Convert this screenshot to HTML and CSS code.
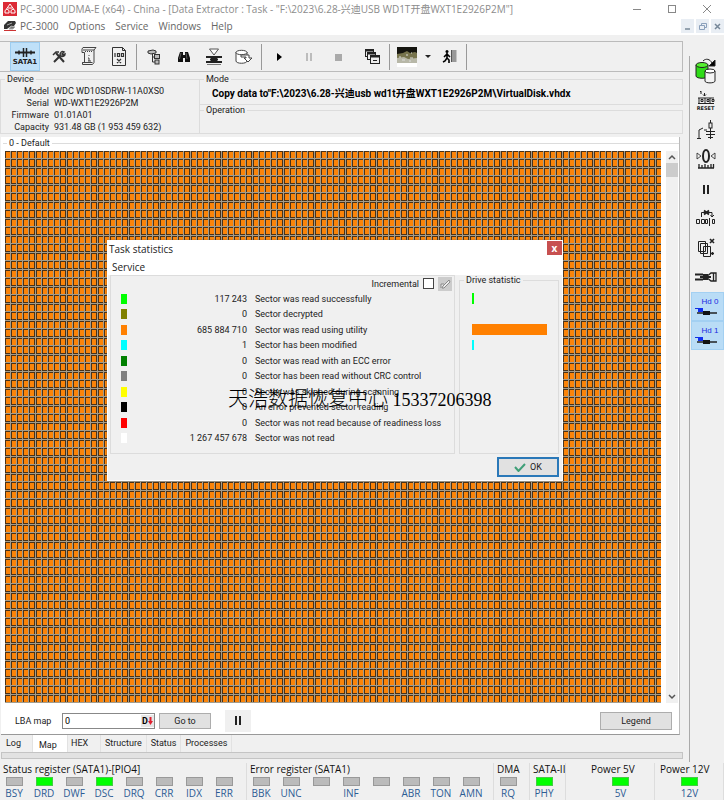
FILE: index.html
```html
<!DOCTYPE html>
<html lang="en">
<head>
<meta charset="utf-8">
<title>PC-3000 UDMA-E</title>
<link rel="stylesheet" href="styles.css">
</head>
<body>
<div class="window">
  <header class="titlebar">
    <svg class="app-icon" width="14" height="14" viewBox="0 0 14 14"><rect width="14" height="14" fill="#dc2a36"/><path d="M7 2L3.500 7M7 2l3.500 5M2 11V8.500L4 7l2 1.500V11zM8 11V8.500L10 7l2 1.500V11zM5 6h4" fill="none" stroke="#fff"/></svg>
    <h1 class="title">PC-3000 UDMA-E (x64) - China - [Data Extractor : Task - "F:\2023\6.28-兴迪USB WD1T开盘WXT1E2926P2M"]</h1>
    <div class="win-controls">
      <button aria-label="Minimize"><svg width="10" height="10"><path d="M1 5.500h8" stroke="#888"/></svg></button>
      <button aria-label="Maximize"><svg width="10" height="10"><rect x="1.500" y="1.500" width="7" height="7" fill="none" stroke="#888"/></svg></button>
      <button aria-label="Close"><svg width="10" height="10"><path d="M1 1l8 8M9 1l-8 8" stroke="#888"/></svg></button>
    </div>
  </header>
  <nav class="menubar">
    <svg width="14" height="12" viewBox="0 0 14 12"><path d="M1 5l4-4h7l1 2-2 3H8L4 9H1z" fill="#333"/><path d="M4 5l5-2M8 6l4 1-2 2H6z" stroke="#aaa" fill="#777"/><path d="M1 10.500h12" stroke="#c33"/></svg>
    <a href="#">PC-3000</a><a href="#">Options</a><a href="#">Service</a><a href="#">Windows</a><a href="#">Help</a>
    <div class="mdi-controls">
      <button aria-label="Minimize task"><svg width="9" height="9"><path d="M2 7h5" stroke="#789" stroke-width="1.500"/></svg></button>
      <button aria-label="Restore task"><svg width="9" height="9"><path d="M3.500 3V1.500h5v4H7M1.500 3.500h5v4h-5z" fill="none" stroke="#8ba0bb"/></svg></button>
      <button aria-label="Close task"><svg width="9" height="9"><path d="M2 2l5 5M7 2L2 7" stroke="#789" stroke-width="1.500"/></svg></button>
    </div>
  </nav>

  <div class="workspace">
    <main class="main">
      <div class="toolbar">
        <button class="tool active" aria-label="SATA1"><svg width="24" height="11" viewBox="0 0 24 11"><path d="M2 5.500h20" stroke="#222" stroke-width="2"/><path d="M6 3.500v4M18 3.500v4M10.500 1v9M13.500 1v9" stroke="#222" stroke-width="1.500"/></svg><span>SATA1</span></button>
        <button class="tool" aria-label="Utilities"><svg width="14" height="14" viewBox="0 0 14 14"><path d="M2 12l7-7M4 3l8 9" stroke="#333" stroke-width="2"/><path d="M1 5l3-3h3M8 5c0-3 2-4 4-3l-2 2 1 1 2-1c0 2-2 3-4 2" fill="none" stroke="#333" stroke-width="1.500"/></svg></button>
        <button class="tool" aria-label="Script"><svg width="18" height="19" viewBox="0 0 18 19" fill="none" stroke="#444"><path d="M4.500 5.500H2V2l1-1.500h13L14 3v12.500l-1.500 2H2.500v-2h2v-10M14 3H3M2.500 15.500h10"/><path d="M5 4.500h7" stroke-dasharray="1 1"/><path d="M9 8v1M8 11h1v3M8 14h3"/></svg></button>
        <button class="tool" aria-label="Report"><svg width="16" height="19" viewBox="0 0 16 19" fill="none" stroke="#333"><path d="M1.500 .5h10l3 3v15h-13zM11.500.5v3h3"/><path d="M4 6v4M6.500 6.500h2v3h-2zM10.500 6.500h2v3h-2zM6 12l4 4M10 12l-4 4" stroke-width="1.200"/></svg></button>
        <span class="sep"></span>
        <button class="tool" aria-label="Tree"><svg width="14" height="16" viewBox="0 0 14 16" fill="#bbb" stroke="#333"><path d="M5.500 4v9H8M5.500 8H8" fill="none"/><path d="M1 2l5-1 3 1v2l-5 1-3-1z"/><rect x="7.500" y="5.500" width="5" height="4"/><rect x="8" y="11" width="4" height="4"/></svg></button>
        <button class="tool" aria-label="Search"><svg width="14" height="12" viewBox="0 0 14 12"><path d="M3 1h3v3h2V1h3l2 6v4H8V7H6v4H1V7z" fill="#111"/><path d="M4 2L2.500 8M9 2l1 6" stroke="#777" stroke-width=".7"/></svg></button>
        <button class="tool" aria-label="Sector edit"><svg width="18" height="17" viewBox="0 0 18 17"><path d="M4.500 1h9L9 7z" fill="#fff" stroke="#555"/><path d="M1 9h16M1 14h16M5 11.500h8" stroke="#222" stroke-width="2"/><path d="M6 8h6v7H6z" fill="#222"/><path d="M2 16.500h14" stroke="#777"/></svg></button>
        <button class="tool" aria-label="Copy image"><svg width="20" height="16" viewBox="0 0 20 16" fill="#fff" stroke="#444"><path d="M2 3v9c0 3 11 3 11 0V3"/><ellipse cx="7.500" cy="3.500" rx="5.500" ry="2.200"/><path d="M7 6h8v3h3l-4 4-4-4h2V8H7z"/></svg></button>
        <span class="sep"></span>
        <button class="tool" aria-label="Start"><svg width="10" height="10"><path d="M3 1v8l5-4z" fill="#000"/></svg></button>
        <button class="tool" aria-label="Pause"><svg width="10" height="10"><path d="M3 1v8M7 1v8" stroke="#aaa" stroke-width="1.500"/></svg></button>
        <button class="tool" aria-label="Stop"><svg width="10" height="10"><rect x="1" y="2" width="7" height="7" fill="#aaa"/></svg></button>
        <span class="space"></span>
        <button class="tool" aria-label="Tasks"><svg width="17" height="17" viewBox="0 0 17 17" fill="#eee" stroke="#222"><rect x="1.500" y="1.500" width="8" height="7"/><path d="M1 2.500h9" stroke-width="2"/><rect x="3.500" y="4.500" width="8" height="7"/><path d="M3 5.500h9" stroke-width="2"/><rect x="6.500" y="7.500" width="9" height="8"/><path d="M6 8.500h10" stroke-width="2"/><path d="M9 12.500h4"/></svg></button>
        <span class="sep"></span>
        <button class="tool" aria-label="Map view"><svg width="20" height="20" viewBox="0 0 20 20"><rect width="20" height="20" fill="#fff"/><rect width="20" height="12" fill="#14140f"/><path d="M0 7l6-1 4-2 3 2 5-1 2 1v7H0z" fill="#77744d"/><path d="M0 11l7-1 4 2 9-1v5H0z" fill="#b8b8a8"/><path d="M2 10h2M9 8h2M13 11h3M14 6h1M5 13h3M12 14h2" stroke="#ddd"/></svg></button>
        <button class="tool narrow" aria-label="Map view options"><svg width="6" height="4"><path d="M0 0h6L3 3z" fill="#222"/></svg></button>
        <button class="tool" aria-label="Exit"><svg width="15" height="15" viewBox="0 0 15 15"><rect x="9.500" y="1" width="5" height="12" fill="#999"/><path d="M9.500 1v12" stroke="#555"/><circle cx="5" cy="2.500" r="1.500"/><path d="M5 4v5l2 2v3M5 9l-2 3-2 1M5 5L2 8M5 5l3 3" fill="none" stroke="#000" stroke-width="1.600"/></svg></button>
        <span class="sep"></span>
      </div>

      <div class="info">
        <fieldset class="group device"><legend>Device</legend>
          <dl>
            <dt>Model</dt><dd>WDC WD10SDRW-11A0XS0</dd>
            <dt>Serial</dt><dd>WD-WXT1E2926P2M</dd>
            <dt>Firmware</dt><dd>01.01A01</dd>
            <dt>Capacity</dt><dd>931.48 GB (1 953 459 632)</dd>
          </dl>
        </fieldset>
        <div class="jobs">
          <fieldset class="group mode"><legend>Mode</legend><p>Copy data to"F:\2023\6.28-兴迪usb wd1t开盘WXT1E2926P2M\VirtualDisk.vhdx</p></fieldset>
          <fieldset class="group operation"><legend>Operation</legend></fieldset>
        </div>
      </div>

      <section class="map-panel">
        <fieldset class="group map-group"><legend>0 - Default</legend>
          <div class="map-row">
            <svg class="map" role="img" aria-label="Sector map" shape-rendering="crispEdges">
              <defs>
                <pattern id="cells" width="31" height="17" patternUnits="userSpaceOnUse">
                  <rect width="31" height="17" fill="#a39c8c"/>
                  <path d="M0 0h5v7H0zM6 0h5v7H6zM12 0h5v7h-5zM18 0h5v7h-5zM24 0h6v7h-6zM0 8h5v8H0zM6 8h5v8H6zM12 8h5v8h-5zM18 8h5v8h-5zM24 8h6v8h-6z" fill="#4a3218"/>
                  <path d="M1 1h4v6H1zM7 1h4v6H7zM13 1h4v6h-4zM19 1h4v6h-4zM25 1h4v6h-4zM1 9h4v6H1zM7 9h4v6H7zM13 9h4v6h-4zM19 9h4v6h-4zM25 9h4v6h-4z" fill="#fb8409"/>
                </pattern>
              </defs>
              <rect width="100%" height="100%" fill="url(#cells)"/>
            </svg>
            <div class="scroll">
              <button aria-label="Scroll up"><svg width="8" height="6"><path d="M1 5l3-3 3 3" fill="none" stroke="#555" stroke-width="1.500"/></svg></button>
              <div class="thumb"></div>
              <button aria-label="Scroll down"><svg width="8" height="6"><path d="M1 1l3 3 3-3" fill="none" stroke="#555" stroke-width="1.500"/></svg></button>
            </div>
          </div>
        </fieldset>
        <div class="lba">
          <label for="lba">LBA map</label>
          <div class="lba-box"><input id="lba" type="text" value="0"><button aria-label="Decimal"><b>D</b><svg width="5" height="8"><path d="M2.500 0v6" stroke="#e02030" stroke-width="2"/><path d="M0 4h5L2.500 8z" fill="#e02030"/></svg></button></div>
          <button class="btn goto">Go to</button>
          <button class="pause" aria-label="Pause map"><svg width="8" height="9"><path d="M2 0v9M6 0v9" stroke="#222" stroke-width="2"/></svg></button>
          <button class="btn legend-btn">Legend</button>
        </div>
      </section>

      <nav class="tabs"><a href="#">Log</a><a href="#" class="current">Map</a><a href="#" class="hex">HEX</a><a href="#">Structure</a><a href="#">Status</a><a href="#">Processes</a></nav>
      <div class="progress"></div>
    </main>

    <aside class="rail">
      <div class="rail-tools">
        <button aria-label="Copy drives"><svg width="22" height="26" viewBox="0 0 22 26" stroke="#222"><path d="M1 7v11c0 3 12 3 12 0V7" fill="#2fdc18"/><ellipse cx="7" cy="7" rx="6" ry="2.500" fill="#55f030"/><path d="M10 13v10c0 2.500 10 2.500 10 0V13" fill="#f4f4f4"/><ellipse cx="15" cy="13" rx="5" ry="2" fill="#fff"/><path d="M8 3c3-3 7-2 9 2" fill="none"/><path d="M20 2v6h-6z" fill="#000"/></svg></button>
        <button class="reset" aria-label="Reset"><svg width="18" height="15" viewBox="0 0 18 15" fill="none" stroke="#222"><path d="M4 1v3M3 2l1-1M7.500 3v3M6 4.500l1.500 1.500L9 4.500"/><path d="M1 8h16M1 13.500h16M2 8v5M4 9.500h2v2H4zM8 8v5M10 9.500h2v2h-2zM13 8v5M15 9.500h2v2h-2z"/></svg><span>RESET</span></button>
        <button aria-label="Power"><svg width="20" height="20" viewBox="0 0 20 20" fill="none" stroke="#222"><path d="M1 18.500h4M3 18v-8l4-2M8 10h3M14.500 0v3M14.500 8v11M10 11.500h9M10 14.500h9M12 17.500h5"/><rect x="13" y="3" width="3" height="5"/></svg></button>
        <button aria-label="Zero position"><svg width="20" height="20" viewBox="0 0 20 20" fill="none" stroke="#222"><ellipse cx="10" cy="7" rx="3" ry="6" stroke-width="2"/><path d="M1 4v6l4-3zM19 4v6l-4-3z" stroke-width=".8"/><path d="M3 15v4M6 16v3M9 15v4M12 16v3M15 15v4M17.500 15v4M2 19h16" stroke-width="1.300"/></svg></button>
        <button aria-label="Pause drive"><svg width="10" height="10"><path d="M3 1v9M7 1v9" stroke="#222" stroke-width="2"/></svg></button>
        <button aria-label="Skip sectors"><svg width="20" height="18" viewBox="0 0 20 18" fill="none" stroke="#222"><path d="M5.500 8V3.500H16v4M14.500 6L16 8l2-2"/><path d="M8 1.500l5 4M13 1.500L8 5.500" stroke-width="1.800"/><path d="M.5 10.500h3v4h-3zM5.500 10.500h3v4h-3zM9.500 10.500h2v4h-2zM13.500 9v8M16.500 10.500h2v4h-2z"/></svg></button>
        <button aria-label="Clear copies"><svg width="20" height="20" viewBox="0 0 20 20" fill="#f0f0f0" stroke="#222"><path d="M2.500 3.500h7v10h-7zM4.500 5.500h7v10h-7zM7.500 8.500h7v10h-7z"/><path d="M14 1l4 4M18 1l-4 4" stroke-width="1.600"/><path d="M15 15.500h3M16.500 14v3" stroke-width="1.300"/></svg></button>
        <button aria-label="Connector"><svg width="22" height="12" viewBox="0 0 22 12"><path d="M0 3.500h8M0 8.500h8M5 6h11" stroke="#222" stroke-width="2"/><path d="M8 3h5v6H8z" fill="#222"/><path d="M13 4.500l3-2.500h5v8h-5l-3-2.500M18.500 2v8" fill="none" stroke="#222" stroke-width="1.300"/></svg></button>
      </div>
      <div class="heads">
        <button><span>Hd 0</span><svg width="22" height="9" viewBox="0 0 22 9"><path d="M0 1.500h6" fill="none" stroke="#1030e0"/><rect x="3" y="1" width="5" height="4" fill="#1030f0"/><path d="M2 6h20" stroke="#222" stroke-width="1.500"/><rect x="8" y="4" width="7" height="4" fill="#111"/></svg></button>
        <button><span>Hd 1</span><svg width="22" height="9" viewBox="0 0 22 9"><path d="M0 1.500h6" fill="none" stroke="#1030e0"/><rect x="3" y="1" width="5" height="4" fill="#1030f0"/><path d="M2 6h20" stroke="#222" stroke-width="1.500"/><rect x="8" y="4" width="7" height="4" fill="#111"/></svg></button>
      </div>
    </aside>
  </div>

  <footer class="status">
    <section class="reg reg-wide"><h2>Status register (SATA1)-[PIO4]</h2><ul><li><i></i>BSY</li><li><i class="on"></i>DRD</li><li><i></i>DWF</li><li><i class="on"></i>DSC</li><li><i></i>DRQ</li><li><i></i>CRR</li><li><i></i>IDX</li><li><i></i>ERR</li></ul></section>
    <section class="reg reg-wide"><h2>Error register (SATA1)</h2><ul><li><i></i>BBK</li><li><i></i>UNC</li><li><i></i></li><li><i></i>INF</li><li><i></i></li><li><i></i>ABR</li><li><i></i>TON</li><li><i></i>AMN</li></ul></section>
    <section class="reg reg-small"><h2>DMA</h2><ul><li><i></i>RQ</li></ul></section>
    <section class="reg reg-small"><h2>SATA-II</h2><ul><li><i class="on"></i>PHY</li></ul></section>
    <span class="reg-gap"></span>
    <section class="reg reg-power"><h2>Power 5V</h2><ul><li><i class="on"></i>5V</li></ul></section>
    <section class="reg reg-power"><h2>Power 12V</h2><ul><li><i class="on"></i>12V</li></ul></section>
  </footer>

  <div class="dialog" role="dialog" aria-labelledby="dlg">
    <div class="dlg-title"><h2 id="dlg">Task statistics</h2><button aria-label="Close dialog">x</button></div>
    <nav class="dlg-menu"><a href="#">Service</a></nav>
    <div class="dlg-body">
      <div class="stats">
        <div class="incremental"><label for="inc">Incremental</label><input type="checkbox" id="inc"><button aria-label="Reset counters"><svg width="12" height="12" viewBox="0 0 12 12"><path d="M2 10V6h3M4 8l6-6 1 2-6 6H3z" fill="#eee" stroke="#888"/></svg></button></div>
        <table>
          <tr><td><i class="sw c-green"></i></td><td>117 243</td><td>Sector was read successfully</td></tr>
          <tr><td><i class="sw c-olive"></i></td><td>0</td><td>Sector decrypted</td></tr>
          <tr><td><i class="sw c-orange"></i></td><td>685 884 710</td><td>Sector was read using utility</td></tr>
          <tr><td><i class="sw c-cyan"></i></td><td>1</td><td>Sector has been modified</td></tr>
          <tr><td><i class="sw c-dark"></i></td><td>0</td><td>Sector was read with an ECC error</td></tr>
          <tr><td><i class="sw c-gray"></i></td><td>0</td><td>Sector has been read without CRC control</td></tr>
          <tr><td><i class="sw c-yellow"></i></td><td>0</td><td>Sector was skipped during scanning</td></tr>
          <tr><td><i class="sw c-black"></i></td><td>0</td><td>An error prevented sector reading</td></tr>
          <tr><td><i class="sw c-red"></i></td><td>0</td><td>Sector was not read because of readiness loss</td></tr>
          <tr><td><i class="sw c-white"></i></td><td>1 267 457 678</td><td>Sector was not read</td></tr>
        </table>
      </div>
      <fieldset class="group drive"><legend>Drive statistic</legend>
        <div class="bars"><i class="c-green tick"></i><i></i><i class="c-orange"></i><i class="c-cyan tick"></i><i></i><i></i><i></i><i></i><i></i><i></i></div>
      </fieldset>
    </div>
    <div class="dlg-foot"><button class="ok"><svg width="12" height="9" viewBox="0 0 12 9"><path d="M1 4l3.500 4L11 1" fill="none" stroke="#3f9f78" stroke-width="2"/></svg>OK</button></div>
  </div>
  <p class="watermark"><span>天浩数据恢复中心</span> 15337206398</p>
</div>
</body>
</html>
```
FILE: styles.css
```css
* { box-sizing: border-box; }
body { margin: 0; background: #f0f0f0; color: #222; font: 9px/12px Roboto, "Noto Sans CJK SC", sans-serif; }
h1, h2, p, ul, dl, dd, fieldset, legend { margin: 0; padding: 0; font-weight: normal; }
ul { list-style: none; }
a { color: inherit; text-decoration: none; }
button { font: inherit; color: inherit; padding: 0; border: 0; background: none; display: flex; align-items: center; justify-content: center; }
svg { display: block; flex: none; }
.window { position: relative; min-height: 100vh; display: flex; flex-direction: column; overflow: hidden; }

.titlebar { display: flex; align-items: center; height: 17px; background: #fff; padding-left: 3px; gap: 3px; }
.title { flex: 1; font: 10px/16px "Open Sans", "Noto Sans CJK SC", sans-serif; color: #8c8c8c; white-space: nowrap; }
.win-controls { display: flex; }
.win-controls button { width: 35px; height: 16px; }
.menubar { display: flex; align-items: center; height: 18px; background: #fff; padding-left: 3px; color: #666; font: 10px/16px "Open Sans", sans-serif; }
.menubar a { margin-left: 3px; padding-right: 7px; }
.mdi-controls { display: flex; gap: 2px; margin-left: auto; }
.mdi-controls button { width: 13px; height: 14px; background: #e9eef4; }

.workspace { flex: 1; display: flex; }
.main { flex: 1; min-width: 0; display: flex; flex-direction: column; padding-top: 6px; }
.toolbar { display: flex; align-items: center; height: 31px; margin-right: 6px; padding-left: 2px; border: 1px solid #bbb; border-left: 0; }
.tool { width: 30px; height: 29px; flex-direction: column; }
.tool.active { background: #bfe0f8; border: 1px solid #9dcdf0; margin: 0 4px 0 8px; font: bold 7px/9px "DejaVu Sans", sans-serif; }
.tool.narrow { width: 12px; }
.sep { width: 1px; height: 26px; background: #999; margin: 0 2px; }
.space { width: 3px; }

.group { border: 1px solid #dcdcdc; min-width: 0; }
.group legend { margin-left: 4px; padding: 0 2px; line-height: 10px; }
.info { display: flex; height: 64px; padding: 2px 6px 2px 0; }
.device { width: 200px; }
.device dl { display: grid; grid-template-columns: 48px 1fr; column-gap: 5px; line-height: 12px; padding-top: 1px; }
.device dt { text-align: right; }
.device dd { white-space: nowrap; }
.jobs { flex: 1; min-width: 0; }
.mode { height: 31px; border-left: 0; }
.mode p { padding: 4px 0 0 12px; font: bold 10px/12px Roboto, "Noto Sans CJK SC", sans-serif; white-space: nowrap; color: #000; }
.operation { height: 29px; border-left: 0; }

.map-panel { flex: 1; display: flex; flex-direction: column; background: #fff; margin: 1px 9px 0 1px; border-right: 1px solid #bbb; border-bottom: 1px solid #999; }
.map-group { flex: 1; margin: 1px 0 0 2px; border-width: 1px 0 0 0; }
.map-row { display: flex; height: 100%; padding: 3px 1px 0 2px; }
.map { flex: 1; min-width: 0; height: 100%; }
.scroll { display: flex; flex-direction: column; width: 12px; margin-left: 5px; background: #f0f0f0; }
.scroll button { height: 12px; width: 12px; }
.thumb { height: 14px; background: #ccc; margin-bottom: auto; }
.lba { display: flex; align-items: center; height: 31px; padding: 4px 7px 0 14px; }
.lba label { width: 47px; }
.lba-box { display: flex; width: 93px; height: 16px; border: 1px solid #888; align-items: center; }
.lba-box input { flex: 1; min-width: 0; border: 0; padding: 0 2px; font: inherit; height: 14px; outline: 0; background: #fff; }
.lba-box button { width: 13px; height: 12px; background: #e6e6e6; color: #000; }
.btn { height: 16px; border: 1px solid #adadad; background: #e1e1e1; }
.goto { width: 52px; margin-left: 4px; }
.pause { width: 26px; height: 22px; background: #f0f0f0; margin-left: 14px; }
.legend-btn { width: 72px; height: 18px; margin-left: auto; }
.tabs { display: flex; height: 17px; padding-left: 2px; line-height: 17px; }
.tabs a { padding: 0 4px; border-right: 1px solid #e2e2e2; }
.tabs a:first-child { width: 31px; }
.tabs .current { width: 35px; background: #fff; padding-top: 2px; padding-left: 6px; }
.tabs .hex { width: 33px; padding-left: 3px; }
.progress { height: 7px; margin: 0 6px 3px 1px; background: #e2e2e2; border: 1px solid #c4c4c4; }

.rail { width: 35px; margin-top: 21px; border-left: 1px solid #aaa; }
.rail-tools { display: grid; grid-auto-rows: 1fr; height: 236px; }
.rail button { width: 100%; padding-right: 3px; }
.rail .reset { flex-direction: column; font: bold 5px/6px "DejaVu Sans", sans-serif; }
.heads { margin-left: 1px; }
.heads button { height: 29px; flex-direction: column; background: #b9dcf6; border: 1px solid #a3d0f2; color: #1a2be0; font: 8px/10px "Liberation Sans", sans-serif; }
.heads span { padding-left: 8px; }

.status { display: flex; height: 38px; padding-top: 1px; font: 10px/12px "Open Sans", sans-serif; }
.reg { border-right: 1px solid #ddd; padding-left: 3px; }
.reg h2 { font: inherit; line-height: 13px; white-space: nowrap; color: #111; }
.reg-wide { width: 247px; }
.reg ul { display: flex; }
.reg li { width: 30px; padding-right: 8px; display: flex; flex-direction: column; align-items: center; color: #2d5c94; }
.reg i { width: 17px; height: 9px; background: #bbb; border: 1px solid #999; margin: 1px 0 1px; }
.reg i.on { background: #0f0; border-color: #4c4; }
.reg-small { width: 36px; }
.reg-gap { width: 20px; }
.reg-power { flex: 1; padding-left: 5px; }
.reg-power ul { justify-content: center; }
.reg-power li { padding-right: 4px; }

.dialog { position: absolute; left: 107px; top: 240px; width: 456px; background: #f0f0f0; border: 1px solid #fff; box-shadow: 0 0 1px #555; }
.dlg-title, .dlg-menu { background: #fff; font: 10px/16px "Open Sans", sans-serif; color: #222; }
.dlg-title { display: flex; justify-content: space-between; height: 18px; padding-left: 1px; }
.dlg-title h2 { font: inherit; }
.dlg-title button { width: 15px; height: 14px; background: #c75050; color: #fff; font-weight: bold; line-height: 12px; }
.dlg-menu { height: 16px; padding-left: 4px; }
.dlg-body { display: flex; gap: 4px; height: 179px; padding: 0 3px 0 2px; }
.stats { flex: 1; border: 1px solid #dcdcdc; }
.incremental { display: flex; align-items: center; justify-content: flex-end; height: 15px; gap: 4px; padding-right: 2px; }
.incremental input { appearance: none; width: 11px; height: 11px; margin: 0; background: #fff; border: 1px solid #444; }
.incremental button { width: 14px; height: 14px; background: #ccc; }
.stats table { width: 100%; height: 155px; border-collapse: collapse; line-height: 12px; }
.stats td { padding: 0; white-space: nowrap; }
.stats td:first-child { width: 30px; padding-left: 10px; }
.stats td:nth-child(2) { width: 106px; text-align: right; }
.stats td:nth-child(3) { padding-left: 8px; }
.sw { display: block; width: 6px; height: 10px; }
.c-green { background: #0f0; }
.c-olive { background: #808000; }
.c-orange { background: #ff8000; }
.c-cyan { background: #0ff; }
.c-dark { background: #008000; }
.c-gray { background: #808080; }
.c-yellow { background: #ff0; }
.c-black { background: #000; }
.c-red { background: #f00; }
.c-white { background: #fff; }
.drive { width: 100px; }
.drive legend { margin-left: 4px; }
.bars { display: grid; grid-auto-rows: 1fr; height: 155px; margin: 5px 11px 0 12px; }
.bars i { margin: 3px 0 2px; }
.bars .tick { width: 2px; }
.dlg-foot { display: flex; justify-content: flex-end; height: 26px; padding: 3px 3px 0 0; }
.ok { width: 62px; height: 20px; border: 2px solid #2a78b8; background: #e1e1e1; gap: 4px; }
.watermark { position: absolute; left: 228px; top: 385px; font: 18px/26px "Liberation Serif", serif; color: #000; white-space: nowrap; }
.watermark span { font: 300 20px/26px "Noto Sans CJK SC", sans-serif; }
```
